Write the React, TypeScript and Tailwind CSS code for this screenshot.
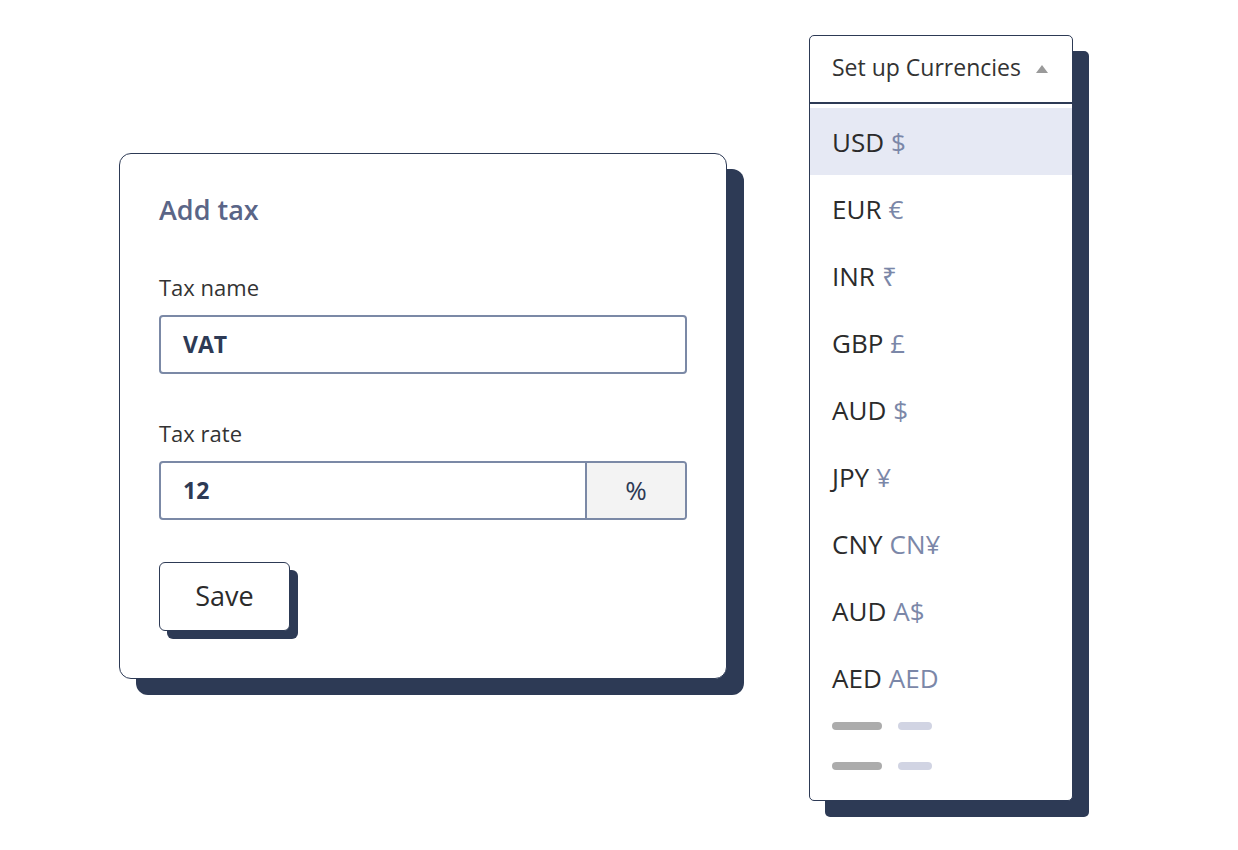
const currencies: [string, string][] = [
  ['USD', '$'],
  ['EUR', '€'],
  ['INR', '₹'],
  ['GBP', '£'],
  ['AUD', '$'],
  ['JPY', '¥'],
  ['CNY', 'CN¥'],
  ['AUD', 'A$'],
  ['AED', 'AED'],
];

function TaxCard() {
  return (
    <div className="mt-[118px] w-[608px] h-[526px] rounded-[12px] border border-[#2d3a55] bg-white shadow-[17px_16px_0_0_#2d3a55] px-[39px] pt-[40px] flex flex-col">
      <h2 className="h-[32px] leading-[32px] text-[27px] font-semibold text-[#5a6587]">Add tax</h2>

      <label className="mt-[47px] h-[28px] leading-[28px] text-[22px] text-[#333]">Tax name</label>
      <div className="mt-[14px] h-[59px] rounded-[4px] border-2 border-[#7b89a6] flex items-center px-[22px]">
        <span className="text-[23px] font-bold text-[#2d3a55]">VAT</span>
      </div>

      <label className="mt-[45px] h-[28px] leading-[28px] text-[22px] text-[#333]">Tax rate</label>
      <div className="mt-[14px] h-[59px] rounded-[4px] border-2 border-[#7b89a6] flex overflow-hidden">
        <div className="flex-1 flex items-center px-[22px]">
          <span className="text-[23px] font-bold text-[#2d3a55]">12</span>
        </div>
        <div className="w-[100px] border-l-2 border-[#7b89a6] bg-[#f3f3f3] flex items-center justify-center text-[26px] text-[#2d3a55]">
          %
        </div>
      </div>

      <button className="mt-[42px] w-[131px] h-[69px] rounded-[6px] border border-[#2d3a55] bg-white shadow-[8px_8px_0_0_#2d3a55] text-[27px] text-[#2b2b2b]">
        Save
      </button>
    </div>
  );
}

function CurrencyMenu() {
  return (
    <div className="w-[264px] h-[766px] rounded-[5px] border border-[#2d3a55] bg-white shadow-[16px_16px_0_0_#2d3a55] flex flex-col overflow-hidden">
      <div className="h-[68px] shrink-0 border-b-2 border-[#2d3a55] flex items-center justify-between pl-[22px] pr-[24px] pb-[3px]">
        <span className="text-[23px] text-[#333]">Set up Currencies</span>
        <span className="mt-[2px] w-0 h-0 border-l-[6px] border-r-[6px] border-b-[8px] border-l-transparent border-r-transparent border-b-[#9a9a9a]" />
      </div>
      <div className="h-[4px] shrink-0" />
      {currencies.map(([code, sym], i) => (
        <div
          key={i}
          className={`h-[67px] shrink-0 flex items-center pl-[22px] pt-[2px] text-[26px] ${i === 0 ? 'bg-[#e6e9f4]' : ''}`}
        >
          <span className="text-[#2b2b2b]">{code}</span>
          <span className="ml-[7px] text-[#7b87a8]">{sym}</span>
        </div>
      ))}
      <div className="mt-[11px] flex flex-col gap-[32px] pl-[22px]">
        {[0, 1].map(k => (
          <div key={k} className="flex gap-[16px]">
            <div className="w-[50px] h-[8px] rounded-full bg-[#acacac]" />
            <div className="w-[34px] h-[8px] rounded-full bg-[#d1d4e3]" />
          </div>
        ))}
      </div>
    </div>
  );
}

export default function App() {
  return (
    <div
      className="w-[1238px] h-[850px] bg-white flex items-start pl-[119px] pt-[35px] gap-[82px]"
      style={{ fontFamily: '"Open Sans", "Noto Sans", "DejaVu Sans", sans-serif' }}
    >
      <TaxCard />
      <CurrencyMenu />
    </div>
  );
}
